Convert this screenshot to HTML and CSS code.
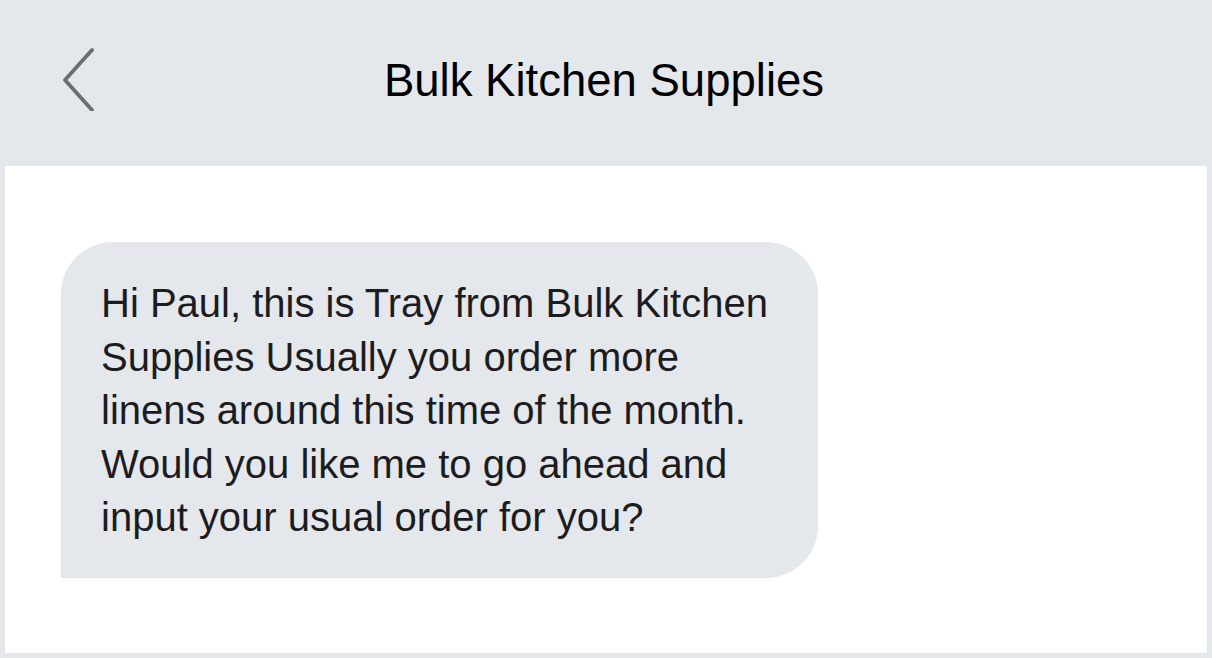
FILE: index.html
```html
<!DOCTYPE html>
<html lang="en">
<head>
  <meta charset="UTF-8" />
  <meta name="viewport" content="width=device-width, initial-scale=1.0"/>
  <title>Bulk Kitchen Supplies</title>
  <link rel="stylesheet" href="styles.css">
</head>
<body>
  <div class="screen">
    <header class="top-bar">
      <button class="back" aria-label="Back">
        <svg width="36" height="64" viewBox="0 0 36 64">
          <polyline points="31,3 4,33 31,63" fill="none" stroke="#6a6e74" stroke-width="3.8" stroke-linecap="round" stroke-linejoin="round"/>
        </svg>
      </button>
      <h1>Bulk Kitchen Supplies</h1>
    </header>
    <main class="thread">
      <div class="bubble">
        Hi Paul, this is Tray from Bulk Kitchen Supplies Usually you order more linens around this time of the month. Would you like me to go ahead and input your usual order for you?
      </div>
    </main>
  </div>
</body>
</html>
```

FILE: styles.css
```css
html, body {
  margin: 0;
  padding: 0;
  height: 100%;
}
body {
  background: #e4e7ec;
  font-family: 'Liberation Sans', Arial, sans-serif;
  color: #1c1c1e;
}
.screen {
  display: flex;
  flex-direction: column;
  height: 658px;
  padding: 0 5px 5px;
  box-sizing: border-box;
}
.top-bar {
  height: 166px;
  flex-shrink: 0;
  display: flex;
  align-items: center;
  justify-content: center;
  position: relative;
}
.back {
  position: absolute;
  left: 56px;
  top: 47px;
  background: none;
  border: none;
  padding: 0;
  cursor: pointer;
}
.top-bar h1 {
  margin: 0 0 0 -4px;
  font-size: 45.5px;
  font-weight: normal;
  color: #000;
  padding-bottom: 4px;
}
.thread {
  flex: 1;
  background: #fff;
  padding: 76px 0 0 56px;
}
.bubble {
  width: 677px;
  background: #e4e7ec;
  border-radius: 52px 52px 52px 0;
  padding: 35px 40px 33px;
  font-size: 40px;
  line-height: 53.5px;
  color: #1c1c1e;
}
```
